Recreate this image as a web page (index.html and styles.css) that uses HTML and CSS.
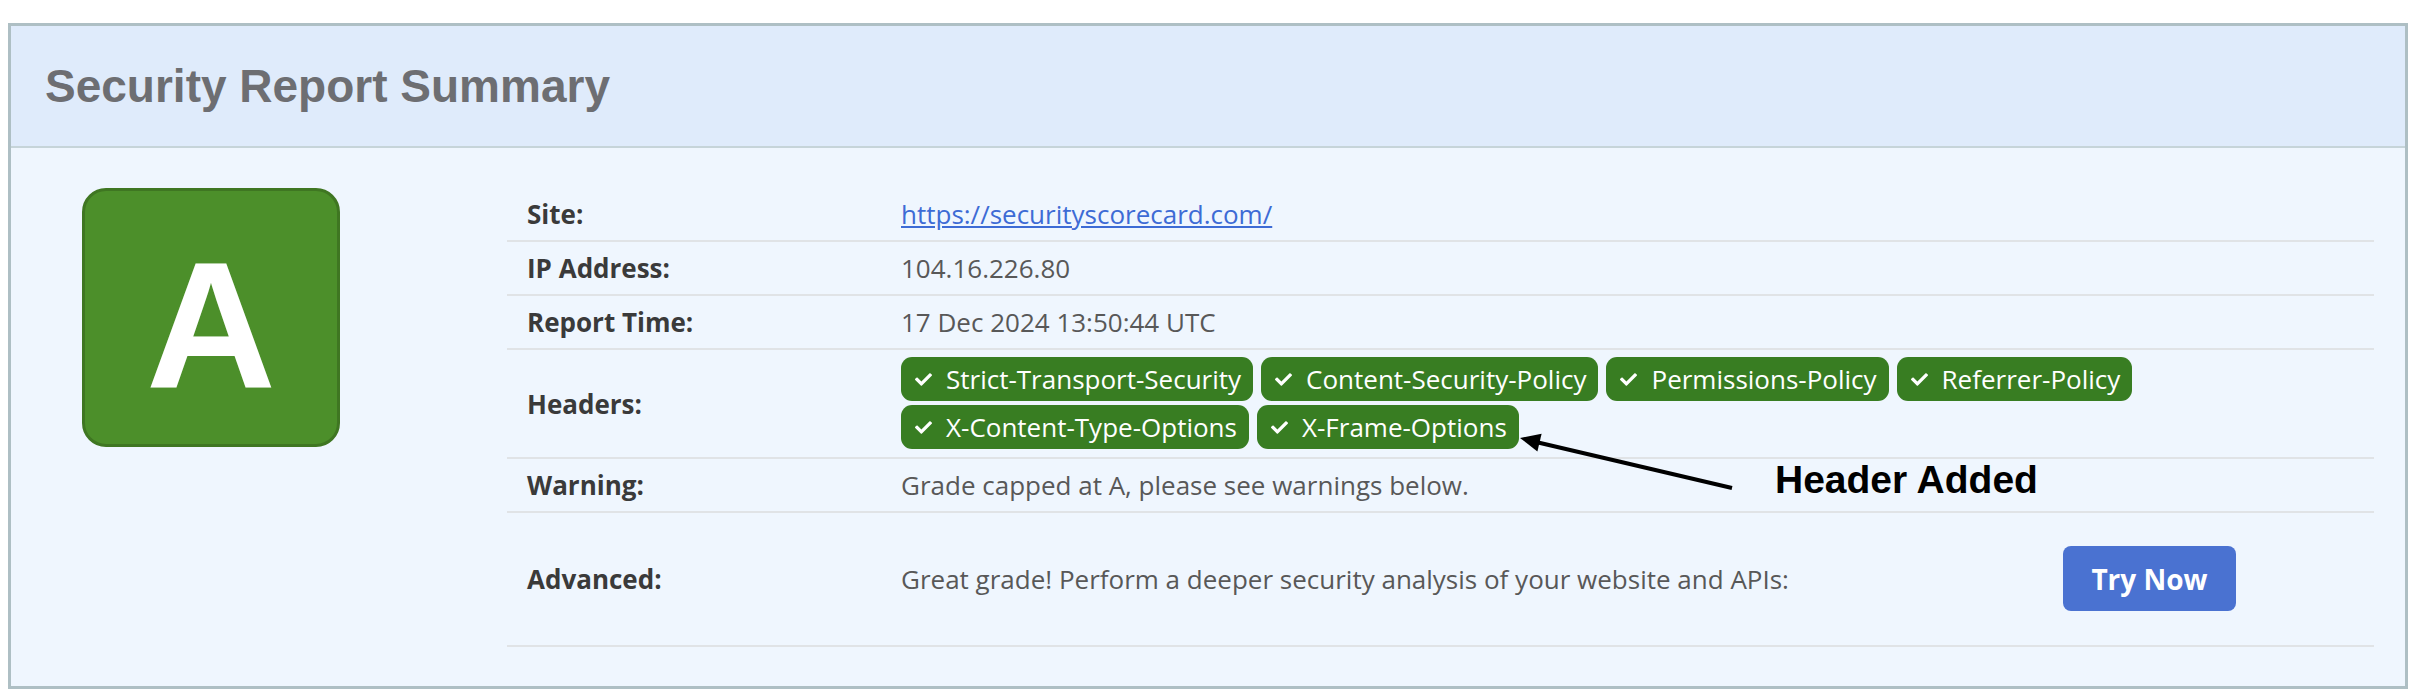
FILE: index.html
```html
<!DOCTYPE html>
<html>
<head>
<meta charset="utf-8">
<link rel="stylesheet" href="styles.css">
</head>
<body>
<div class="card">
  <div class="card-head">
    <h1 class="title">Security Report Summary</h1>
  </div>
  <div class="card-body">
    <div class="grade"><span>A</span></div>
    <div class="report">
      <div class="row">
        <div class="label">Site:</div>
        <div class="value"><a class="link" href="#">https://securityscorecard.com/</a></div>
      </div>
      <div class="row">
        <div class="label">IP Address:</div>
        <div class="value">104.16.226.80</div>
      </div>
      <div class="row">
        <div class="label">Report Time:</div>
        <div class="value">17 Dec 2024 13:50:44 UTC</div>
      </div>
      <div class="row">
        <div class="label">Headers:</div>
        <div class="value value-badges">
          <span class="badge"><svg class="check" viewBox="0 0 512 512"><path d="M173.898 439.404l-166.4-166.4c-9.997-9.997-9.997-26.206 0-36.204l36.203-36.204c9.997-9.998 26.207-9.998 36.204 0L192 312.69 432.095 72.596c9.997-9.997 26.207-9.997 36.204 0l36.203 36.204c9.997 9.997 9.997 26.206 0 36.204l-294.4 294.401c-9.998 9.997-26.207 9.997-36.204-.001z"/></svg>Strict-Transport-Security</span>
          <span class="badge"><svg class="check" viewBox="0 0 512 512"><path d="M173.898 439.404l-166.4-166.4c-9.997-9.997-9.997-26.206 0-36.204l36.203-36.204c9.997-9.998 26.207-9.998 36.204 0L192 312.69 432.095 72.596c9.997-9.997 26.207-9.997 36.204 0l36.203 36.204c9.997 9.997 9.997 26.206 0 36.204l-294.4 294.401c-9.998 9.997-26.207 9.997-36.204-.001z"/></svg>Content-Security-Policy</span>
          <span class="badge"><svg class="check" viewBox="0 0 512 512"><path d="M173.898 439.404l-166.4-166.4c-9.997-9.997-9.997-26.206 0-36.204l36.203-36.204c9.997-9.998 26.207-9.998 36.204 0L192 312.69 432.095 72.596c9.997-9.997 26.207-9.997 36.204 0l36.203 36.204c9.997 9.997 9.997 26.206 0 36.204l-294.4 294.401c-9.998 9.997-26.207 9.997-36.204-.001z"/></svg>Permissions-Policy</span>
          <span class="badge"><svg class="check" viewBox="0 0 512 512"><path d="M173.898 439.404l-166.4-166.4c-9.997-9.997-9.997-26.206 0-36.204l36.203-36.204c9.997-9.998 26.207-9.998 36.204 0L192 312.69 432.095 72.596c9.997-9.997 26.207-9.997 36.204 0l36.203 36.204c9.997 9.997 9.997 26.206 0 36.204l-294.4 294.401c-9.998 9.997-26.207 9.997-36.204-.001z"/></svg>Referrer-Policy</span>
          <span class="badge"><svg class="check" viewBox="0 0 512 512"><path d="M173.898 439.404l-166.4-166.4c-9.997-9.997-9.997-26.206 0-36.204l36.203-36.204c9.997-9.998 26.207-9.998 36.204 0L192 312.69 432.095 72.596c9.997-9.997 26.207-9.997 36.204 0l36.203 36.204c9.997 9.997 9.997 26.206 0 36.204l-294.4 294.401c-9.998 9.997-26.207 9.997-36.204-.001z"/></svg>X-Content-Type-Options</span>
          <span class="badge"><svg class="check" viewBox="0 0 512 512"><path d="M173.898 439.404l-166.4-166.4c-9.997-9.997-9.997-26.206 0-36.204l36.203-36.204c9.997-9.998 26.207-9.998 36.204 0L192 312.69 432.095 72.596c9.997-9.997 26.207-9.997 36.204 0l36.203 36.204c9.997 9.997 9.997 26.206 0 36.204l-294.4 294.401c-9.998 9.997-26.207 9.997-36.204-.001z"/></svg>X-Frame-Options</span>
        </div>
      </div>
      <div class="row">
        <div class="label">Warning:</div>
        <div class="value">Grade capped at A, please see warnings below.</div>
      </div>
      <div class="row row-advanced">
        <div class="label">Advanced:</div>
        <div class="value value-advanced">
          <span>Great grade! Perform a deeper security analysis of your website and APIs:</span>
          <a class="try" href="#">Try Now</a>
        </div>
      </div>
    </div>
  </div>
  <svg class="arrow" viewBox="0 0 260 90" width="260" height="90">
    <line x1="232" y1="68" x2="36" y2="22" stroke="#000" stroke-width="4"/>
    <polygon points="20,18 41.6,13.8 37.4,31.4" fill="#000"/>
  </svg>
  <div class="note">Header Added</div>
</div>
</body>
</html>
```

FILE: styles.css
```css
* { box-sizing: border-box; }

html, body {
  margin: 0;
  padding: 0;
  background: #ffffff;
}

body {
  font-family: "Open Sans", "Noto Sans", sans-serif;
}

.card {
  position: relative;
  margin: 23px 12px 0 8px;
  border: 3px solid #aebfc4;
  background: #eff6fe;
}

.card-head {
  height: 122px;
  display: flex;
  align-items: center;
  padding: 0 34px;
  background: #dfebfb;
  border-bottom: 2px solid #c6d4d9;
}

.title {
  margin: 0;
  font-family: "Liberation Sans", Arial, sans-serif;
  font-weight: 700;
  font-size: 46px;
  color: #6d6e72;
}

.card-body {
  display: flex;
  align-items: flex-start;
  padding: 40px 31px 39px 71px;
}

.grade {
  flex: none;
  width: 258px;
  height: 259px;
  border: 3px solid #3f7622;
  border-radius: 24px;
  background: #4c8f2a;
  display: flex;
  align-items: center;
  justify-content: center;
  padding-top: 17px;
  font-family: "Liberation Sans", Arial, sans-serif;
  font-weight: 700;
  font-size: 180px;
  line-height: 1;
  color: #ffffff;
}

.report {
  flex: 1;
  margin-left: 167px;
}

.row {
  display: grid;
  grid-template-columns: 394px 1fr;
  align-items: center;
  border-bottom: 2px solid #e0e3e6;
  font-size: 26px;
  line-height: 36px;
}

.label {
  padding: 8px 0 8px 20px;
  font-weight: 700;
  color: #3a3a3a;
}

.value {
  padding: 8px 0;
  color: #585858;
}

.link {
  color: #3d6bd5;
  text-decoration: underline;
}

.value-badges {
  display: flex;
  flex-wrap: wrap;
  gap: 4px 8px;
  padding: 7px 0 8px;
}

.badge {
  display: inline-flex;
  align-items: center;
  height: 44px;
  padding: 0 12px 0 14px;
  border-radius: 11px;
  background: #387d22;
  color: #ffffff;
  font-size: 26px;
  line-height: 30px;
}

.check {
  width: 17px;
  height: 17px;
  margin-right: 14px;
  fill: #ffffff;
}

.value-advanced {
  display: flex;
  align-items: center;
  padding: 33px 0 34px;
}

.try {
  margin-left: auto;
  margin-right: 138px;
  width: 173px;
  height: 65px;
  display: flex;
  align-items: center;
  justify-content: center;
  border-radius: 8px;
  background: #4a72d1;
  color: #ffffff;
  font-weight: 700;
  font-size: 28px;
  text-decoration: none;
}

.arrow {
  position: absolute;
  left: 1489px;
  top: 394px;
  pointer-events: none;
}

.note {
  position: absolute;
  left: 1764px;
  top: 434px;
  font-family: "Liberation Sans", Arial, sans-serif;
  font-weight: 700;
  font-size: 39px;
  line-height: 1;
  color: #000000;
}
```
